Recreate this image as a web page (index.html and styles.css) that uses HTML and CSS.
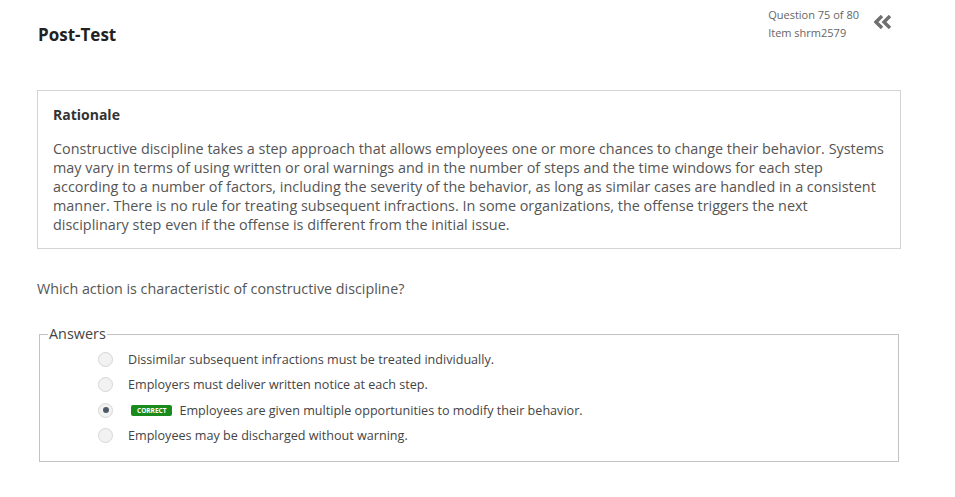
FILE: index.html
```html
<!DOCTYPE html>
<html>
<head>
    <meta charset="utf-8">
    <link rel="stylesheet" href="styles.css">
</head>
<body>
    <div class="page">
      <div class="header">
        <h1 class="title">Post-Test</h1>
        <div class="meta">
          <div class="counter">
            <div>Question 75 of 80</div>
            <div>Item shrm2579</div>
          </div>
          <svg class="collapse" width="18" height="14" viewBox="0 0 18 14">
            <path d="M8 1 L2 7 L8 13" fill="none" stroke="#6f6f6f" stroke-width="3.4"/>
            <path d="M16 1 L10 7 L16 13" fill="none" stroke="#6f6f6f" stroke-width="3.4"/>
          </svg>
        </div>
      </div>

      <div class="rationale">
        <h3>Rationale</h3>
        <p>Constructive discipline takes a step approach that allows employees one or more chances to change their behavior. Systems may vary in terms of using written or oral warnings and in the number of steps and the time windows for each step according to a number of factors, including the severity of the behavior, as long as similar cases are handled in a consistent manner. There is no rule for treating subsequent infractions. In some organizations, the offense triggers the next disciplinary step even if the offense is different from the initial issue.</p>
      </div>

      <p class="question">Which action is characteristic of constructive discipline?</p>

      <fieldset class="answers">
        <legend>Answers</legend>
        <div class="answer"><span class="radio"></span><span>Dissimilar subsequent infractions must be treated individually.</span></div>
        <div class="answer"><span class="radio"></span><span>Employers must deliver written notice at each step.</span></div>
        <div class="answer"><span class="radio checked"></span><span class="badge">CORRECT</span><span>Employees are given multiple opportunities to modify their behavior.</span></div>
        <div class="answer"><span class="radio"></span><span>Employees may be discharged without warning.</span></div>
      </fieldset>
    </div>
</body>
</html>
```

FILE: styles.css
```css
* {
margin: 0;
padding: 0;
box-sizing: border-box;
}

body {
font-family: "Open Sans", sans-serif;
color: #555555;
background-color: #FFFFFF;
}

.page {
width: 864px;
margin-left: 37px;
}

.header {
display: flex;
justify-content: space-between;
align-items: flex-start;
height: 90px;
}

.title {
font-size: 17px;
font-weight: bold;
color: #222222;
margin-top: 23px;
margin-left: 1px;
}

.meta {
display: flex;
align-items: flex-start;
margin-top: 6px;
margin-right: 9px;
}

.counter {
font-size: 11px;
line-height: 18px;
color: #666666;
}

.collapse {
margin-left: 15px;
margin-top: 9px;
}

.rationale {
border: 1px solid #d4d4d4;
padding: 15px 15px 14px;
}

.rationale h3 {
font-size: 14px;
font-weight: bold;
color: #333333;
line-height: 18px;
margin-bottom: 15px;
}

.rationale p {
font-size: 14.4px;
line-height: 19px;
}

.question {
font-size: 14.3px;
line-height: 19px;
margin-top: 30px;
}

.answers {
border: 1px solid #c2c2c2;
margin: 28px 2px 0;
padding: 5px 0 13px 0;
}

.answers legend {
font-size: 14.4px;
color: #444444;
padding: 0 1px;
margin-left: 8px;
line-height: 16px;
}

.answer {
display: flex;
align-items: center;
height: 25.3px;
padding-left: 58px;
font-size: 12.6px;
color: #444444;
}

.radio {
width: 15px;
height: 15px;
border-radius: 50%;
border: 1px solid #d6d6d6;
background-color: #f2f2f2;
margin-right: 15px;
position: relative;
}

.radio.checked::after {
content: '';
position: absolute;
top: 50%;
left: 50%;
width: 6px;
height: 6px;
border-radius: 50%;
background-color: #4f5966;
transform: translate(-50%, -50%);
}

.badge {
background-color: #198a1c;
color: #FFFFFF;
font-size: 6.5px;
font-weight: bold;
padding: 1px 6px;
border-radius: 2px;
margin: 0 7px 0 3px;
line-height: 9px;
}
```
